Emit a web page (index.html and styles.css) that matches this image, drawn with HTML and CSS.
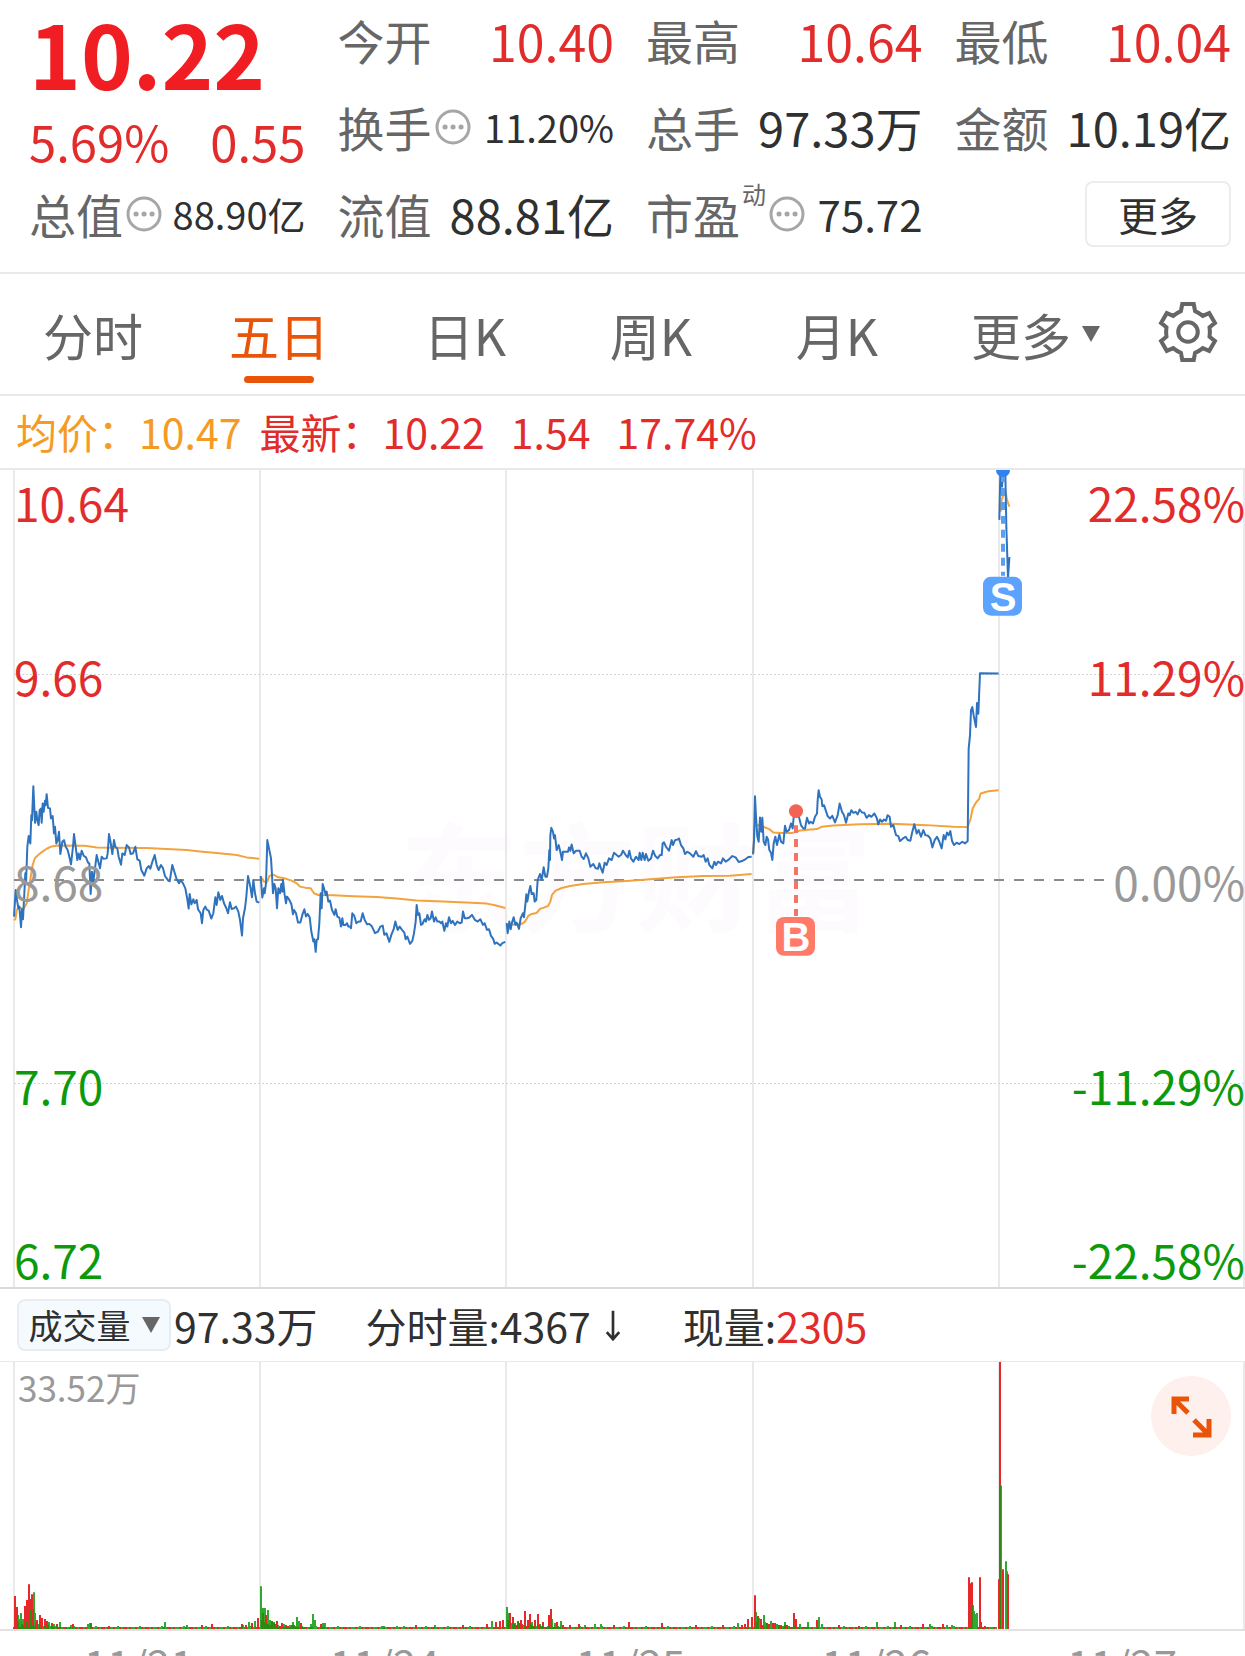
FILE: index.html
```html
<!DOCTYPE html>
<html lang="zh-CN">
<head>
<meta charset="UTF-8" />
<meta name="viewport" content="width=device-width, initial-scale=1" />
<title>五日行情</title>
<link rel="stylesheet" href="styles.css">
</head>
<body>
<div class="page">

    <!-- 行情摘要 -->
    <header class="quote">
        <div class="price">
            <strong class="price-now">10.22</strong>
            <div class="price-change"><span>5.69%</span><span>0.55</span></div>
        </div>
        <div class="stat"><span class="label">今开</span><span class="value up">10.40</span></div>
        <div class="stat"><span class="label">最高</span><span class="value up">10.64</span></div>
        <div class="stat"><span class="label">最低</span><span class="value up">10.04</span></div>
        <div class="stat">
            <span class="label">换手</span>
            <svg class="info" viewBox="0 0 36 36"><circle cx="18" cy="18" r="16"/><path d="M10 18h.1M18 18h.1M26 18h.1"/></svg>
            <span class="value small">11.20%</span>
        </div>
        <div class="stat"><span class="label">总手</span><span class="value unit">97.33万</span></div>
        <div class="stat"><span class="label">金额</span><span class="value unit">10.19亿</span></div>
        <div class="stat">
            <span class="label">总值</span>
            <svg class="info" viewBox="0 0 36 36"><circle cx="18" cy="18" r="16"/><path d="M10 18h.1M18 18h.1M26 18h.1"/></svg>
            <span class="value small">88.90亿</span>
        </div>
        <div class="stat"><span class="label">流值</span><span class="value unit">88.81亿</span></div>
        <div class="stat">
            <span class="label">市盈</span><span class="mark">动</span>
            <svg class="info" viewBox="0 0 36 36"><circle cx="18" cy="18" r="16"/><path d="M10 18h.1M18 18h.1M26 18h.1"/></svg>
            <span class="value medium">75.72</span>
        </div>
        <div class="stat"><button type="button" class="more-btn">更多</button></div>
    </header>

    <!-- 周期切换 -->
    <nav class="tabs">
        <button type="button" class="tab">分时</button>
        <button type="button" class="tab active">五日</button>
        <button type="button" class="tab">日K</button>
        <button type="button" class="tab">周K</button>
        <button type="button" class="tab">月K</button>
        <button type="button" class="tab">更多<svg class="caret" viewBox="0 0 18 16"><path d="M0 0h18L9 16z"/></svg></button>
        <button type="button" class="tab settings" aria-label="设置">
            <svg class="gear" viewBox="-95 -95 190 190">
                <path d="M-17-83H17L21-62Q33-57 44-48L63-56 80-27 64-14Q66 0 64 14L80 27 63 56 44 48Q33 57 21 62L17 83H-17L-21 62Q-33 57-44 48L-63 56-80 27-64 14Q-66 0-64-14L-80-27-63-56-44-48Q-33-57-21-62Z"/>
                <circle r="29"/>
            </svg>
        </button>
    </nav>

    <div class="legend">
        <span class="avg">均价：10.47</span>
        <span>最新：10.22</span>
        <span>1.54</span>
        <span>17.74%</span>
    </div>

    <!-- 五日价格走势 -->
    <section class="price-chart">
        <svg class="plot" viewBox="0 0 1245 819" preserveAspectRatio="none">
            <text class="watermark" x="636" y="454">东方财富</text>
            <path class="grid" d="M14 0V819M260 0V819M506 0V819M753 0V819M999 0V819M1244 0V819"/>
            <path class="grid dotted" d="M14 205H1245M14 615H1245"/>
            <path class="zero" d="M14 411H1110"/>

            <g transform="translate(0 271) scale(.33333)">
                <path class="line avg-line" d="M42 541L46 538 50 512 56 500 70 508 80 490 86 450 93 405 98 375 105 354 120 340 140 326 155 319 175 316 255 317 290 322 340 323 440 324 500 327 560 330 600 334 650 339 710 345 740 352 778 356"/>
                <path class="line" d="M42 530L47 450 51 480 55 505 58 500 63 562 66 508 69 538 73 460 76 400 78 430 82 320 86 288 91 310 94 225 96 240 100 138 105 248 109 215 112 240 116 255 119 210 123 205 125 248 128 190 131 215 135 182 137 195 140 162 144 203 150 205 153 235 158 228 162 280 165 260 169 310 173 300 177 275 181 342 187 305 192 300 197 320 203 330 208 350 213 373 219 320 222 282 227 320 232 360 236 340 240 358 245 332 251 347 258 352 264 368 268 370 272 462 276 395 280 425 285 385 290 345 295 365 300 385 305 350 310 356 320 355 323 340 327 282 332 308 337 342 342 300 346 320 352 325 356 350 363 374 367 340 374 345 380 315 387 322 392 342 399 340 406 320 412 358 419 362 424 390 433 407 440 385 446 378 451 386 457 365 464 345 470 375 476 390 483 375 489 385 495 408 505 422 509 424 517 375 523 395 530 418 537 430 542 420 549 430 556 445 562 478 566 506 569 462 574 493 580 478 584 490 590 480 594 508 602 520 606 550 610 510 616 500 621 510 626 512 634 536 640 520 646 472 650 495 655 457 661 480 666 468 672 490 679 505 684 520 690 487 695 507 702 505 708 500 715 515 720 540 726 587 729 535 735 505 739 470 744 408 751 440 756 472 760 420 765 460 770 485 778 488"/>
            </g>
            <g transform="translate(250 311) scale(.33333)">
                <path class="line avg-line" d="M32 290L42 305 52 305 58 288 70 284 85 292 100 294 125 302 140 310 150 320 165 323 182 325 192 340 205 345 250 346 310 349 380 351 440 356 500 362 580 365 680 369 710 371 735 376 766 384"/>
                <path class="line" d="M32 288L37 353 42 325 44 340 48 310 52 180 57 205 63 235 66 285 69 340 73 312 77 325 81 385 85 325 90 340 94 312 97 335 99 300 104 345 108 370 111 350 117 358 124 372 129 403 132 390 138 400 144 428 151 428 157 405 163 388 168 410 173 402 179 412 184 455 190 485 193 478 197 516 200 480 204 478 208 430 212 340 215 385 218 312 222 325 227 345 230 335 235 365 240 362 246 390 253 405 257 388 262 410 268 413 273 440 277 415 280 435 287 435 291 430 295 440 300 440 303 445 307 400 313 408 319 430 326 425 332 425 338 400 344 420 351 433 358 432 366 440 375 460 384 455 391 440 398 437 403 465 409 460 418 486 424 465 431 448 436 425 443 450 449 440 456 450 463 458 467 478 472 470 480 492 487 483 492 460 497 425 500 375 504 405 508 400 513 435 517 433 524 418 528 425 532 405 537 420 542 415 546 395 552 425 557 412 562 425 568 425 573 430 577 425 583 453 588 430 592 440 597 412 603 430 608 423 615 435 622 425 629 430 635 428 639 395 644 415 651 415 658 413 666 405 675 420 683 425 691 418 699 435 704 430 711 450 717 448 723 468 730 478 734 492 740 488 751 497 757 490 766 486"/>
            </g>
            <g transform="translate(490 311) scale(.33333)">
                <path class="line avg-line" d="M50 437L70 434 95 432 105 425 115 408 125 402 140 399 150 387 162 383 174 378 181 365 186 345 197 332 215 324 240 318 280 312 340 307 410 303 480 298 560 292 640 288 720 287 785 282"/>
                <path class="line" d="M50 430L53 460 58 425 62 448 66 428 71 412 76 435 80 428 87 447 92 415 99 400 102 412 106 375 109 343 112 365 117 335 121 318 125 342 131 340 134 365 139 360 143 300 150 282 155 300 161 262 166 290 171 290 175 265 178 210 180 240 181 165 184 143 189 155 192 175 195 165 200 210 206 195 211 215 216 240 219 215 227 215 234 215 237 202 241 212 245 193 251 220 258 212 269 212 275 230 281 237 288 220 295 235 301 260 310 252 317 265 324 266 328 250 333 265 338 278 344 248 350 255 357 235 365 240 372 218 380 225 386 230 393 225 399 212 407 225 413 232 418 212 423 235 430 245 438 230 446 240 449 218 454 240 458 218 464 240 468 222 475 242 483 235 489 212 496 228 503 235 510 225 515 225 518 190 522 187 528 200 537 212 545 180 549 195 555 180 563 178 567 175 573 195 580 205 585 222 592 215 600 220 610 230 618 213 625 228 635 230 641 225 647 245 653 235 658 255 667 265 673 245 678 255 684 245 693 250 699 235 707 245 717 238 727 228 737 232 746 246 756 243 767 237 775 231 785 230"/>
            </g>
            <g transform="translate(740 181) scale(.33333)">
                <path class="line avg-line" d="M40 610L44 525 60 525 75 532 88 537 100 547 125 549 155 549 180 541 230 537 245 530 280 526 360 522 455 521 560 525 640 530 683 531 692 505 698 475 708 457 717 447 722 430 745 423 776 420"/>
                <path class="line" d="M39 613L42 570 45 438 48 500 52 560 56 575 60 502 64 545 67 503 71 575 76 585 80 560 84 568 88 600 93 608 97 630 101 580 106 560 111 585 118 553 123 575 130 580 135 527 140 545 147 540 153 520 158 535 162 490 167 475 173 490 178 505 183 525 190 535 195 535 201 503 207 520 212 515 219 520 225 500 231 490 233 450 236 420 240 440 245 448 247 468 252 465 257 480 263 498 270 505 277 497 285 517 293 495 299 460 306 485 312 495 318 518 325 490 329 495 334 480 340 488 347 485 353 493 359 478 366 487 373 488 380 503 387 495 394 500 403 490 410 503 415 523 420 508 426 515 432 508 438 512 443 495 449 500 453 530 460 525 468 555 475 558 480 573 489 565 497 560 503 570 511 572 517 545 523 522 530 550 536 540 543 560 550 540 556 555 564 557 571 565 577 592 584 570 591 560 598 575 605 595 611 555 616 568 621 547 626 555 631 543 636 572 642 585 650 578 658 582 667 575 675 580 683 573 686 295 690 255 693 180 697 170 701 195 708 230 711 158 715 190 720 68 776 69"/>
            </g>
            <g transform="translate(960 -20) scale(.33333)">
                <path class="line avg-line" d="M122 185L125 150 130 135 137 125 141 150 148 170"/>
                <path class="line" d="M118 210L121 70 126 110 130 62 136 70 139 230 144 385 148 325 151 325"/>
            </g>

            <!-- 买卖点标记 -->
            <path class="marker-stem buy" d="M796 356V447"/>
            <circle class="marker-dot buy" cx="796" cy="342" r="7"/>
            <path class="marker-stem sell" d="M1003 4V106"/>
            <circle class="marker-dot sell" cx="1003" cy="0" r="7"/>
            <rect class="marker buy" x="776" y="448" width="39" height="39" rx="8"/>
            <text class="marker-text" x="796" y="482">B</text>
            <rect class="marker sell" x="983" y="107" width="39" height="39" rx="8"/>
            <text class="marker-text" x="1003" y="141">S</text>
        </svg>
        <div class="axis">
            <span class="up">10.64</span>
            <span class="up">9.66</span>
            <span class="flat">8.68</span>
            <span class="down">7.70</span>
            <span class="down">6.72</span>
        </div>
        <div class="axis right">
            <span class="up">22.58%</span>
            <span class="up">11.29%</span>
            <span class="flat">0.00%</span>
            <span class="down">-11.29%</span>
            <span class="down">-22.58%</span>
        </div>
    </section>

    <div class="volume-bar">
        <button type="button" class="volume-select">成交量<svg class="caret" viewBox="0 0 18 16"><path d="M0 0h18L9 16z"/></svg></button>
        <span class="total">97.33万</span>
        <span class="minute">分时量:4367<svg class="arrow" viewBox="0 0 20 36"><path d="M10 2V34M3 26L10 34 17 26"/></svg></span>
        <span>现量:<span class="up">2305</span></span>
    </div>

    <!-- 成交量柱 -->
    <section class="volume-chart">
        <svg class="plot" viewBox="0 0 1245 268" preserveAspectRatio="none">
            <path class="grid" d="M14 0V268M260 0V268M506 0V268M753 0V268M999 0V268M1244 0V268"/>
            <path class="bars red" id="bars-up"/>
            <path class="bars green" id="bars-down"/>
        </svg>
        <span class="volume-max">33.52万</span>
        <button type="button" class="expand" aria-label="全屏">
            <svg viewBox="0 0 80 80"><path d="M38 23H23V38M24 24L37 37M42 59H58V43M57 58L43 44"/></svg>
        </button>
    </section>

    <footer class="dates">
        <span>11/21</span><span>11/24</span><span>11/25</span><span>11/26</span><span>11/27</span>
    </footer>

</div>

<script>
    const BASE = 268;

    // [x, 高度]
    const up = [
        [15, 33], [17, 22], [25, 23], [27, 29], [29, 45], [30, 30], [32, 35], [33, 20], [37, 9], [40, 14],
        [42, 11], [45, 10], [47, 8], [52, 6], [57, 5], [73, 5], [91, 6], [109, 3], [202, 4], [212, 5],
        [242, 5], [246, 4], [252, 6], [258, 11], [263, 16], [266, 14], [272, 8], [277, 8], [301, 6], [321, 5],
        [416, 4], [463, 4], [487, 5], [496, 7], [500, 8], [503, 9], [510, 16], [513, 12], [518, 8], [521, 9],
        [525, 18], [528, 9], [530, 15], [535, 9], [538, 15], [543, 7], [549, 14], [551, 20], [557, 7], [563, 4],
        [570, 4], [579, 5], [614, 4], [629, 7], [662, 6], [696, 4], [723, 4], [742, 4], [745, 5], [748, 10],
        [752, 12], [755, 34], [758, 13], [761, 10], [773, 6], [781, 4], [794, 16], [796, 10], [817, 9], [839, 4],
        [859, 3], [901, 4], [923, 5], [943, 5], [969, 52], [971, 46], [972, 47], [980, 52], [981, 7], [985, 3],
        [999, 50], [1000, 268], [1003, 60], [1008, 55]
    ];
    const down = [
        [18, 14], [19, 10], [21, 16], [23, 10], [31, 20], [34, 37], [35, 16], [49, 7], [54, 5], [60, 7],
        [71, 4], [88, 5], [90, 6], [165, 7], [187, 4], [243, 4], [249, 7], [255, 8], [261, 43], [263, 21],
        [265, 21], [268, 19], [270, 9], [274, 7], [284, 5], [290, 4], [293, 7], [297, 12], [299, 8], [311, 5],
        [313, 15], [315, 9], [323, 6], [325, 6], [384, 3], [397, 3], [435, 4], [492, 8], [507, 22], [509, 16],
        [515, 6], [532, 7], [540, 5], [552, 10], [555, 6], [561, 8], [585, 4], [595, 5], [601, 5], [738, 6],
        [756, 17], [759, 11], [764, 14], [767, 5], [771, 8], [785, 7], [800, 5], [808, 7], [819, 12], [822, 5],
        [877, 7], [895, 7], [910, 3], [930, 5], [947, 4], [952, 4], [973, 24], [974, 18], [975, 15], [977, 16],
        [1001, 144], [1006, 68], [1007, 58]
    ];

    // 盘中的小成交量
    for (let x = 14; x < 997; x += 2) {
        const n = (x * 37) % 11;
        (n % 2 ? up : down).push([x, n > 9 ? 3 : 2]);
    }
    // 开盘后一小时成交较密集
    [14, 260, 506, 753].forEach(start => {
        for (let i = 2; i < 56; i += 2) {
            const h = Math.round((8 - i / 8) * (0.6 + (i * 7 % 5) / 8));
            (i % 3 ? up : down).push([start + i, Math.max(h, 2)]);
        }
    });

    function drawBars(id, bars) {
        document.getElementById(id).setAttribute('d', bars.map(([x, h]) => `M${x} ${BASE}v${-h}`).join(''));
    }

    drawBars('bars-up', up);
    drawBars('bars-down', down);
</script>
</body>
</html>
```
FILE: styles.css
```css
* {
    box-sizing: border-box;
}
body {
    margin: 0;
    background: #fff;
    color: #2f3030;
    font-family: "Noto Sans CJK SC", sans-serif;
}
button {
    padding: 0;
    border: none;
    background: none;
    color: inherit;
    font-family: inherit;
    cursor: pointer;
}
.page {
    display: flex;
    flex-direction: column;
    height: 100vh;
    overflow: hidden;
}
.page > * {
    flex-shrink: 0;
}
.up { color: #e22c2c; }
.down { color: #0c9a0c; }
.flat { color: #999; }

/* 行情摘要 */
.quote {
    display: grid;
    grid-template-columns: repeat(4, 1fr);
    grid-template-rows: repeat(3, 80px);
    gap: 7px 32px;
    padding: 0 14px 18px 29px;
    border-bottom: 2px solid #e9e9eb;
}
.price {
    grid-row: span 2;
    color: #f01e22;
}
.price-now {
    display: block;
    font-size: 88px;
    line-height: 104px;
}
.price-change {
    display: flex;
    justify-content: space-between;
    color: #e22c2c;
    font-size: 49px;
    line-height: 74px;
}
.stat {
    display: flex;
    align-items: center;
    line-height: 80px;
    white-space: nowrap;
}
.label {
    color: #666;
    font-size: 47px;
}
.value {
    margin-left: auto;
    font-size: 50px;
}
.value.unit { font-size: 47px; }
.value.medium { font-size: 42px; }
.value.small { font-size: 38px; }
.mark {
    align-self: flex-start;
    margin-left: 2px;
    color: #666;
    font-size: 24px;
    line-height: 40px;
}
.info {
    width: 36px;
    height: 36px;
    margin-left: 3px;
    fill: none;
    stroke: #a6a6a6;
    stroke-width: 3;
}
.info path {
    stroke-width: 5;
    stroke-linecap: round;
}
.more-btn {
    width: 146px;
    height: 66px;
    margin-left: auto;
    border: 2px solid #ececf0;
    border-radius: 8px;
    font-size: 40px;
    line-height: 60px;
}

/* 周期切换 */
.tabs {
    display: grid;
    grid-template-columns: repeat(5, 186fr) 211fr 104fr;
    height: 122px;
    border-bottom: 2px solid #e9e9eb;
}
.tab {
    display: flex;
    position: relative;
    align-items: center;
    justify-content: center;
    color: #666;
    font-size: 50px;
    line-height: 120px;
}
.tab.active {
    color: #ea5409;
}
.tab.active::after {
    content: "";
    position: absolute;
    bottom: 11px;
    width: 70px;
    height: 7px;
    border-radius: 4px;
    background: #ea5409;
}
.tab.settings {
    justify-content: flex-start;
    padding: 0 0 4px 15px;
}
.caret {
    width: 18px;
    height: 16px;
    margin-left: 11px;
    fill: #666;
}
.gear {
    width: 64px;
    height: 64px;
    fill: none;
    stroke: #666;
    stroke-width: 12;
}

.legend {
    display: flex;
    gap: 26px;
    height: 74px;
    padding-left: 16px;
    border-bottom: 2px solid #e9e9eb;
    color: #e22c2c;
    font-size: 41px;
    line-height: 70px;
}
.legend .avg {
    margin-right: -8px;
    color: #f59a23;
}

/* 走势图 */
.price-chart,
.volume-chart {
    position: relative;
}
.price-chart {
    height: 819px;
    border-bottom: 2px solid #dcd9dc;
}
.plot {
    display: block;
    width: 100%;
    height: 100%;
}
.grid {
    fill: none;
    stroke: #d4d4d8;
    stroke-width: 1;
}
.dotted {
    stroke-dasharray: 2 2;
}
.zero {
    stroke: #8a8a8a;
    stroke-width: 2;
    stroke-dasharray: 10 10;
}
.watermark {
    fill: #fefbfe;
    font-size: 118px;
    font-weight: 700;
    text-anchor: middle;
}
.line {
    fill: none;
    stroke: #2f72bd;
    stroke-width: 6;
    stroke-linejoin: round;
}
.avg-line {
    stroke: #f2a33c;
}
.marker-stem {
    fill: none;
    stroke-width: 4;
    stroke-dasharray: 8 6;
}
.marker-stem.buy { stroke: #f27565; }
.marker-stem.sell { stroke: #5b9ff0; }
.marker-dot.buy { fill: #f26355; }
.marker-dot.sell { fill: #2f82f0; }
.marker.buy { fill: #ff7a69; }
.marker.sell { fill: #5ba3ff; }
.marker-text {
    fill: #fff;
    font-family: "Liberation Sans", sans-serif;
    font-size: 40px;
    font-weight: 700;
    text-anchor: middle;
}
.axis {
    display: grid;
    position: absolute;
    inset: 2px auto -2px 14px;
    grid-template-rows: 105fr 200fr 210fr 200fr 104fr;
    align-items: center;
    font-size: 46px;
    line-height: 60px;
}
.axis span:first-child { align-self: start; }
.axis span:last-child { align-self: end; }
.axis.right {
    right: 0;
    left: auto;
    text-align: right;
}

/* 成交量 */
.volume-bar {
    display: flex;
    align-items: center;
    height: 72px;
    padding-left: 17px;
    font-size: 41px;
    line-height: 70px;
}
.volume-select {
    display: flex;
    align-items: center;
    justify-content: center;
    width: 154px;
    height: 52px;
    border: 2px solid #e8edf3;
    border-radius: 8px;
    background: #f5faff;
    font-size: 34px;
    line-height: 48px;
}
.total {
    margin-left: 3px;
}
.minute {
    display: flex;
    align-items: center;
    margin: 0 60px 0 48px;
}
.arrow {
    width: 20px;
    height: 32px;
    margin-left: 12px;
    fill: none;
    stroke: #2f3030;
    stroke-width: 3;
}
.volume-chart {
    height: 270px;
    border-top: 1px solid #e9e9eb;
    border-bottom: 2px solid #e3e1e3;
}
.bars {
    fill: none;
    stroke-width: 2;
}
.bars.red { stroke: #e6282b; }
.bars.green {
    stroke: #0c9a0c;
    stroke-opacity: .85;
}
.volume-max {
    position: absolute;
    top: 0;
    left: 18px;
    color: #999;
    font-size: 35px;
    line-height: 50px;
}
.expand {
    position: absolute;
    top: 14px;
    right: 14px;
    width: 80px;
    height: 80px;
    border-radius: 50%;
    background: #fef0ec;
}
.expand svg {
    display: block;
    fill: none;
    stroke: #ea5409;
    stroke-width: 5;
}
.dates {
    display: grid;
    grid-template-columns: repeat(5, 1fr);
    padding: 3px 0 0 16px;
    color: #999;
    font-size: 42px;
    line-height: 60px;
    text-align: center;
}
```
